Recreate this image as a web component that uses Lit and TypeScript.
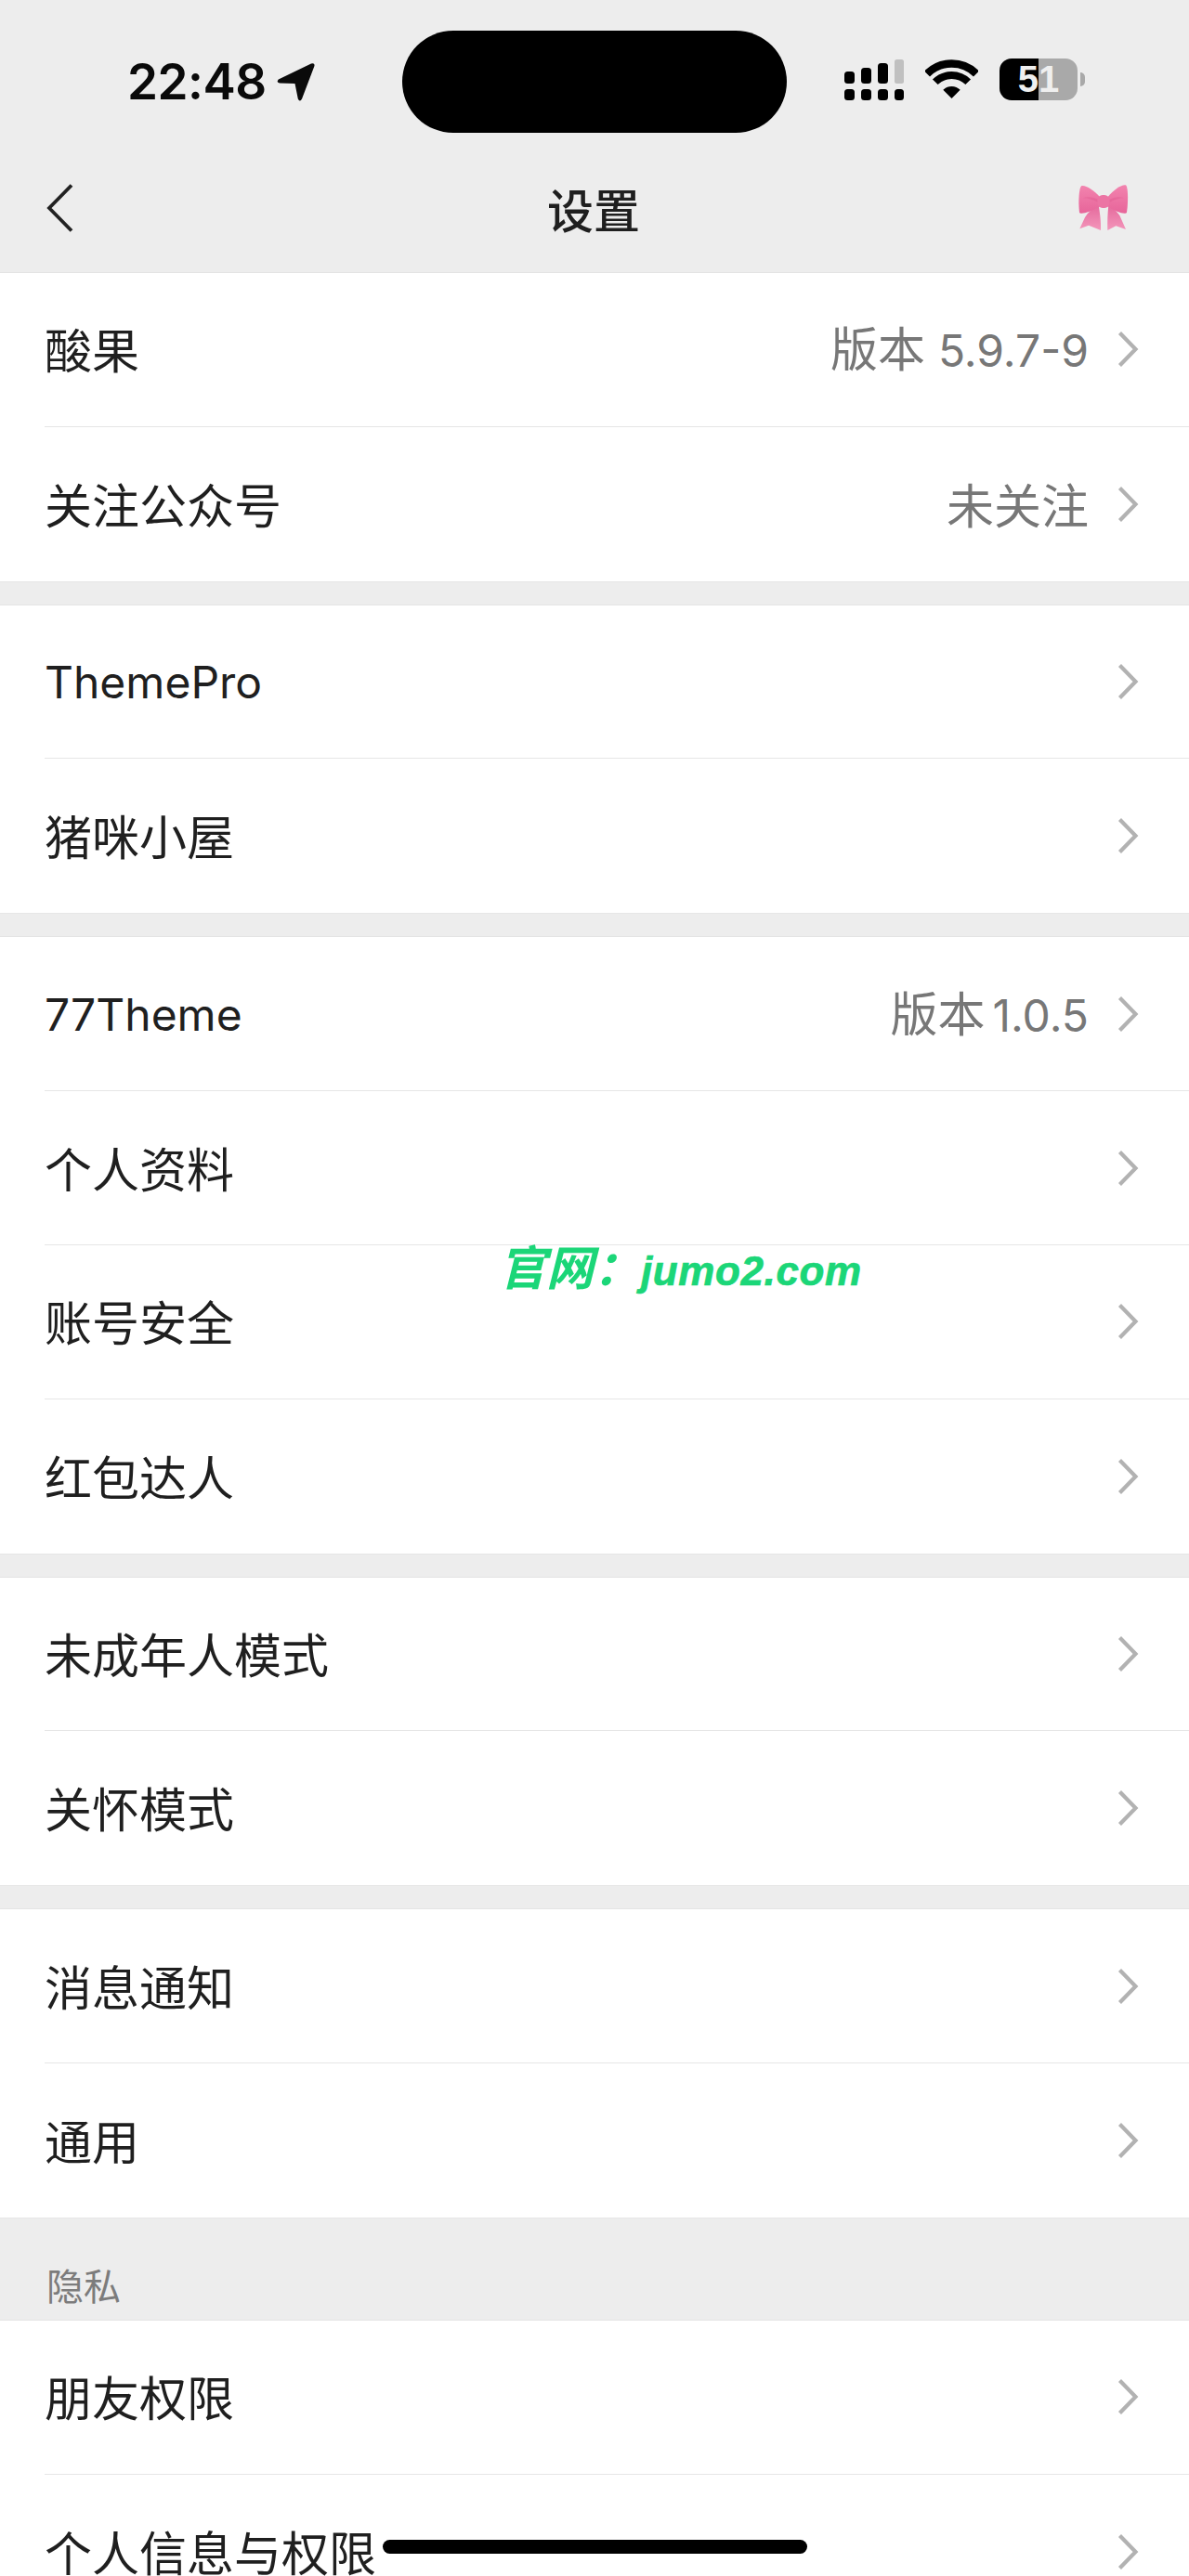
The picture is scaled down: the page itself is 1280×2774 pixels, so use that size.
import { LitElement, html, css, svg } from "lit";
import { customElement } from "lit/decorators.js";

type Row = { label: string; latin?: boolean; valueCjk?: string; valueNum?: string; tight?: boolean };
const sections: { title?: string; rows: Row[] }[] = [
  { rows: [{ label: "酸果", valueCjk: "版本", valueNum: "5.9.7-9" }, { label: "关注公众号", valueCjk: "未关注" }] },
  { rows: [{ label: "ThemePro", latin: true }, { label: "猪咪小屋" }] },
  { rows: [{ label: "77Theme", latin: true, valueCjk: "版本", valueNum: "1.0.5", tight: true }, { label: "个人资料" }, { label: "账号安全" }, { label: "红包达人" }] },
  { rows: [{ label: "未成年人模式" }, { label: "关怀模式" }] },
  { rows: [{ label: "消息通知" }, { label: "通用" }] },
  { title: "隐私", rows: [{ label: "朋友权限" }, { label: "个人信息与权限" }] },
];

const chevron = svg`<svg class="chev" viewBox="0 0 24 40" width="24" height="40"><path d="M3.5 2.5 L20.5 20 L3.5 37.5" fill="none" stroke="#b2b2b2" stroke-width="4.2"/></svg>`;

@customElement("app-root")
export class AppRoot extends LitElement {
  static styles = css`
    :host {
      display: block;
      position: relative;
      width: 1280px;
      height: 2774px;
      overflow: hidden;
      background: #ededed;
      font-family: Inter, "Noto Sans CJK SC", sans-serif;
      color: #1f1f1f;
    }
    .header { height: 294px; box-sizing: border-box; }
    .status { display: flex; height: 143px; box-sizing: border-box; padding: 33px 0 0 137px; }
    .time-wrap { display: flex; width: 296px; height: 110px; align-items: center; gap: 13px; }
    .time { font-size: 53px; font-weight: 600; color: #0a0a0a; line-height: 1; letter-spacing: -0.5px; font-family: Inter, sans-serif; width: 148px; white-space: nowrap; }
    .island { width: 414px; height: 110px; border-radius: 55px; background: #000; }
    .indicators { display: flex; margin: 30px 0 0 62px; height: 45px; align-items: flex-start; }
    .signal { margin-top: 1px; }
    .wifi { margin: 1px 0 0 23px; }
    .battery {
      margin-left: 23px; width: 84px; height: 45px; border-radius: 13px;
      background: linear-gradient(to right, #000 50%, #a9a9a9 50%);
      display: flex; align-items: center; justify-content: center;
      color: #efefef; font: 700 40px/45px "Liberation Sans", sans-serif;
    }
    .tip { margin: 15px 0 0 3px; width: 5px; height: 15px; background: #a9a9a9; border-radius: 0 8px 8px 0; }
    .nav { display: grid; grid-template-columns: 1fr auto 1fr; align-items: center; height: 151px; box-sizing: border-box; padding: 10px 50px 0 48px; }
    .back { margin-left: 2px; }
    .title { font-size: 50px; font-weight: 500; line-height: 60px; color: #1f1f1f; font-family: "Noto Sans CJK SC", sans-serif; }
    .bow { justify-self: end; margin-right: 13px; }
    .section { background: #fff; box-shadow: 0 -1px 0 #e4e4e4, 0 1px 0 #e6e6e6; margin-bottom: 26px; }
    .section.titled { margin-bottom: 0; }
    .row { height: 165.83px; box-sizing: border-box; padding-left: 48px; display: flex; }
    .row-in { flex: 1; display: flex; align-items: center; padding-right: 54px; border-bottom: 1px solid #e6e6e6; }
    .row:last-child .row-in { border-bottom: 0; }
    .label { flex: 1; font-size: 51px; line-height: 60px; white-space: nowrap; font-family: "Noto Sans CJK SC", sans-serif; padding-bottom: 2px; }
    .label.latin { font-size: 48px; font-family: Inter, sans-serif; padding: 2px 0 0; }
    .value { font-size: 51px; line-height: 60px; color: #777; white-space: nowrap; margin-right: 30px; padding-bottom: 1px; font-family: "Noto Sans CJK SC", sans-serif; }
    .num { font-size: 48px; font-family: Inter, sans-serif; margin-left: 14px; }
    .num.tight { margin-left: 8px; }
    .chev { flex: none; }
    .sec-title { height: 111px; box-sizing: border-box; padding: 52px 0 0 50px; font-size: 40px; line-height: 40px; color: #7c7c7c; font-family: "Noto Sans CJK SC", sans-serif; }
    .mark {
      position: absolute; left: 537px; top: 1332px; white-space: nowrap;
      color: #1bd678; font: italic 700 51px/60px "Noto Sans CJK SC", sans-serif;
    }
    .mark span { font: italic 700 44px/60px "Liberation Sans", sans-serif; letter-spacing: 0.6px; -webkit-text-stroke: 0.7px #1bd678; }
    .home { position: absolute; left: 412px; top: 2735px; width: 457px; height: 15px; border-radius: 8px; background: #000; }
  `;

  render() {
    return html`
      <div class="header">
        <div class="status">
          <div class="time-wrap">
            <div class="time">22:48</div>
            <svg viewBox="0 0 41 41" width="41" height="41"><path d="M37 .5 Q41.5 -.5 40.3 3.5 L27 38.5 Q24.8 42.5 22.8 38.5 L19.5 22 L3 21.5 Q-1 20.5 1.8 17.5 Z" fill="#0a0a0a"/></svg>
          </div>
          <div class="island"></div>
          <div class="indicators">
            <svg class="signal" viewBox="0 0 64 44" width="64" height="44" fill="#000">
              <rect x="0" y="13" width="11" height="13" rx="3.5"/>
              <rect x="18" y="9" width="11" height="17" rx="3.5"/>
              <rect x="36" y="4" width="11" height="22" rx="3.5"/>
              <rect x="54" y="0" width="10" height="26" rx="2.5" fill="#c0c0c0"/>
              <rect x="0" y="32" width="11" height="12" rx="3.5"/>
              <rect x="18" y="32" width="11" height="12" rx="3.5"/>
              <rect x="36" y="32" width="11" height="12" rx="3.5"/>
              <rect x="54" y="32" width="10" height="12" rx="3.5"/>
            </svg>
            <svg class="wifi" viewBox="0 0 57 42" width="57" height="42">
              <path d="M2 15.5 A37.5 37.5 0 0 1 55 15.5" fill="none" stroke="#000" stroke-width="8.5"/>
              <path d="M10.8 24.3 A25 25 0 0 1 46.2 24.3" fill="none" stroke="#000" stroke-width="8"/>
              <path d="M28.5 42 L19.3 32.8 A13 13 0 0 1 37.7 32.8 Z" fill="#000"/>
            </svg>
            <div class="battery">51</div>
            <div class="tip"></div>
          </div>
        </div>
        <div class="nav">
          <svg class="back" viewBox="0 0 30 54" width="30" height="54"><path d="M27 2.5 L3 27 L27 51.5" fill="none" stroke="#222" stroke-width="3.8"/></svg>
          <div class="title">设置</div>
          <svg class="bow" viewBox="90 55 170 160" width="56.7" height="53.3">
            <defs>
              <linearGradient id="b" x1="0" y1="0" x2="0" y2="1"><stop offset="0" stop-color="#f283ae"/><stop offset="1" stop-color="#e7659a"/></linearGradient>
              <linearGradient id="t" x1="0" y1="0" x2="0" y2="1"><stop offset="0" stop-color="#e56a9c"/><stop offset="1" stop-color="#f396bb"/></linearGradient>
            </defs>
            <path d="M152 128 C138 140 122 152 114 166 L97 203 L126 192 L165 208 C166 180 162 150 158 128Z" fill="url(#t)"/>
            <path d="M190 128 C187 155 186 180 187 208 L214 194 L246 205 L226 160 C216 146 204 136 196 128Z" fill="url(#t)"/>
            <path d="M162 100 C142 78 118 62 104 64 C94 66 92 120 96 150 C98 158 132 150 162 130Z" fill="url(#b)"/>
            <path d="M188 100 C208 76 232 60 245 62 C254 64 254 120 249 150 C246 158 214 150 188 130Z" fill="url(#b)"/>
            <path d="M160 110 C140 100 122 98 108 104 C126 104 142 110 160 120Z" fill="#e25f94" opacity=".55"/>
            <path d="M190 110 C210 100 226 98 240 104 C222 104 206 110 190 120Z" fill="#e25f94" opacity=".55"/>
            <rect x="154" y="94" width="40" height="42" rx="17" fill="#ec74a4"/>
          </svg>
        </div>
      </div>
      ${sections.map(
        (s, i) => html`
          ${s.title ? html`<div class="sec-title">${s.title}</div>` : ""}
          <div class="section ${i === 4 ? "titled" : ""}">
            ${s.rows.map(
              (r) => html`<div class="row"><div class="row-in">
                <div class="label ${r.latin ? "latin" : ""}">${r.label}</div>
                ${r.valueCjk
                  ? html`<div class="value">${r.valueCjk}${r.valueNum ? html`<span class="num ${r.tight ? "tight" : ""}">${r.valueNum}</span>` : ""}</div>`
                  : ""}
                ${chevron}
              </div></div>`
            )}
          </div>
        `
      )}
      <div class="mark">官网：<span>jumo2.com</span></div>
      <div class="home"></div>
    `;
  }
}
